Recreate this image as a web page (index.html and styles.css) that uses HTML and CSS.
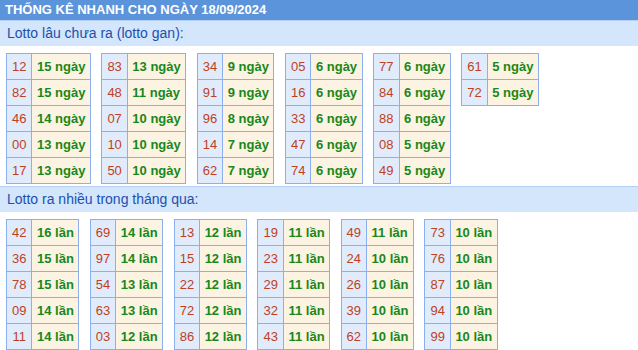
FILE: index.html
```html
<!DOCTYPE html>
<html lang="vi">
<head>
<meta charset="utf-8">
<title>Thống kê nhanh</title>
<link rel="stylesheet" href="styles.css">
</head>
<body>
<div class="title">THỐNG KÊ NHANH CHO NGÀY 18/09/2024</div>

<div class="heading first">Lotto lâu chưa ra (lotto gan):</div>
<div class="tables">
  <table class="lt"><tr><td class="n">12</td><td class="c">15 ngày</td></tr><tr><td class="n">82</td><td class="c">15 ngày</td></tr><tr><td class="n">46</td><td class="c">14 ngày</td></tr><tr><td class="n">00</td><td class="c">13 ngày</td></tr><tr><td class="n">17</td><td class="c">13 ngày</td></tr></table>
  <table class="lt"><tr><td class="n">83</td><td class="c">13 ngày</td></tr><tr><td class="n">48</td><td class="c">11 ngày</td></tr><tr><td class="n">07</td><td class="c">10 ngày</td></tr><tr><td class="n">10</td><td class="c">10 ngày</td></tr><tr><td class="n">50</td><td class="c">10 ngày</td></tr></table>
  <table class="lt"><tr><td class="n">34</td><td class="c">9 ngày</td></tr><tr><td class="n">91</td><td class="c">9 ngày</td></tr><tr><td class="n">96</td><td class="c">8 ngày</td></tr><tr><td class="n">14</td><td class="c">7 ngày</td></tr><tr><td class="n">62</td><td class="c">7 ngày</td></tr></table>
  <table class="lt"><tr><td class="n">05</td><td class="c">6 ngày</td></tr><tr><td class="n">16</td><td class="c">6 ngày</td></tr><tr><td class="n">33</td><td class="c">6 ngày</td></tr><tr><td class="n">47</td><td class="c">6 ngày</td></tr><tr><td class="n">74</td><td class="c">6 ngày</td></tr></table>
  <table class="lt"><tr><td class="n">77</td><td class="c">6 ngày</td></tr><tr><td class="n">84</td><td class="c">6 ngày</td></tr><tr><td class="n">88</td><td class="c">6 ngày</td></tr><tr><td class="n">08</td><td class="c">5 ngày</td></tr><tr><td class="n">49</td><td class="c">5 ngày</td></tr></table>
  <table class="lt"><tr><td class="n">61</td><td class="c">5 ngày</td></tr><tr><td class="n">72</td><td class="c">5 ngày</td></tr></table>
</div>

<div class="heading second">Lotto ra nhiều trong tháng qua:</div>
<div class="tables">
  <table class="lt"><tr><td class="n">42</td><td class="c">16 lần</td></tr><tr><td class="n">36</td><td class="c">15 lần</td></tr><tr><td class="n">78</td><td class="c">15 lần</td></tr><tr><td class="n">09</td><td class="c">14 lần</td></tr><tr><td class="n">11</td><td class="c">14 lần</td></tr></table>
  <table class="lt"><tr><td class="n">69</td><td class="c">14 lần</td></tr><tr><td class="n">97</td><td class="c">14 lần</td></tr><tr><td class="n">54</td><td class="c">13 lần</td></tr><tr><td class="n">63</td><td class="c">13 lần</td></tr><tr><td class="n">03</td><td class="c">12 lần</td></tr></table>
  <table class="lt"><tr><td class="n">13</td><td class="c">12 lần</td></tr><tr><td class="n">15</td><td class="c">12 lần</td></tr><tr><td class="n">22</td><td class="c">12 lần</td></tr><tr><td class="n">72</td><td class="c">12 lần</td></tr><tr><td class="n">86</td><td class="c">12 lần</td></tr></table>
  <table class="lt"><tr><td class="n">19</td><td class="c">11 lần</td></tr><tr><td class="n">23</td><td class="c">11 lần</td></tr><tr><td class="n">29</td><td class="c">11 lần</td></tr><tr><td class="n">32</td><td class="c">11 lần</td></tr><tr><td class="n">43</td><td class="c">11 lần</td></tr></table>
  <table class="lt"><tr><td class="n">49</td><td class="c">11 lần</td></tr><tr><td class="n">24</td><td class="c">10 lần</td></tr><tr><td class="n">26</td><td class="c">10 lần</td></tr><tr><td class="n">39</td><td class="c">10 lần</td></tr><tr><td class="n">62</td><td class="c">10 lần</td></tr></table>
  <table class="lt"><tr><td class="n">73</td><td class="c">10 lần</td></tr><tr><td class="n">76</td><td class="c">10 lần</td></tr><tr><td class="n">87</td><td class="c">10 lần</td></tr><tr><td class="n">94</td><td class="c">10 lần</td></tr><tr><td class="n">99</td><td class="c">10 lần</td></tr></table>
</div>
</body>
</html>
```

FILE: styles.css
```css
html, body {
  margin: 0;
  padding: 0;
  background: #ffffff;
  font-family: "Liberation Sans", Arial, sans-serif;
}

.title {
  height: 20px;
  line-height: 20px;
  padding-left: 5px;
  background: #5b94da;
  color: #ffffff;
  font-size: 13px;
  font-weight: bold;
}

.heading {
  height: 25px;
  line-height: 25px;
  padding-left: 7px;
  background: #d3e6fb;
  border-top: 1px solid #b3d0f4;
  color: #1d4fb0;
  font-size: 14px;
}

.heading.second {
  margin-top: 2px;
}

.tables {
  display: flex;
  align-items: flex-start;
  gap: 10.5px;
  padding: 7px 6px 0 6px;
}

.lt {
  border-collapse: separate;
  border-spacing: 0;
  border-top: 1px solid #8cafee;
  border-left: 1px solid #8cafee;
  font-size: 13px;
}

.lt td {
  height: 25px;
  line-height: 25px;
  padding: 0;
  border-right: 1px solid #8cafee;
  border-bottom: 1px solid #8cafee;
  white-space: nowrap;
}

.lt .n {
  padding: 0 5px;
  background: #e0ecfb;
  color: #bf3f1e;
  text-align: center;
}

.lt .c {
  padding: 0 4.5px;
  background: #fdf3e2;
  color: #18881a;
  font-weight: bold;
}
```
